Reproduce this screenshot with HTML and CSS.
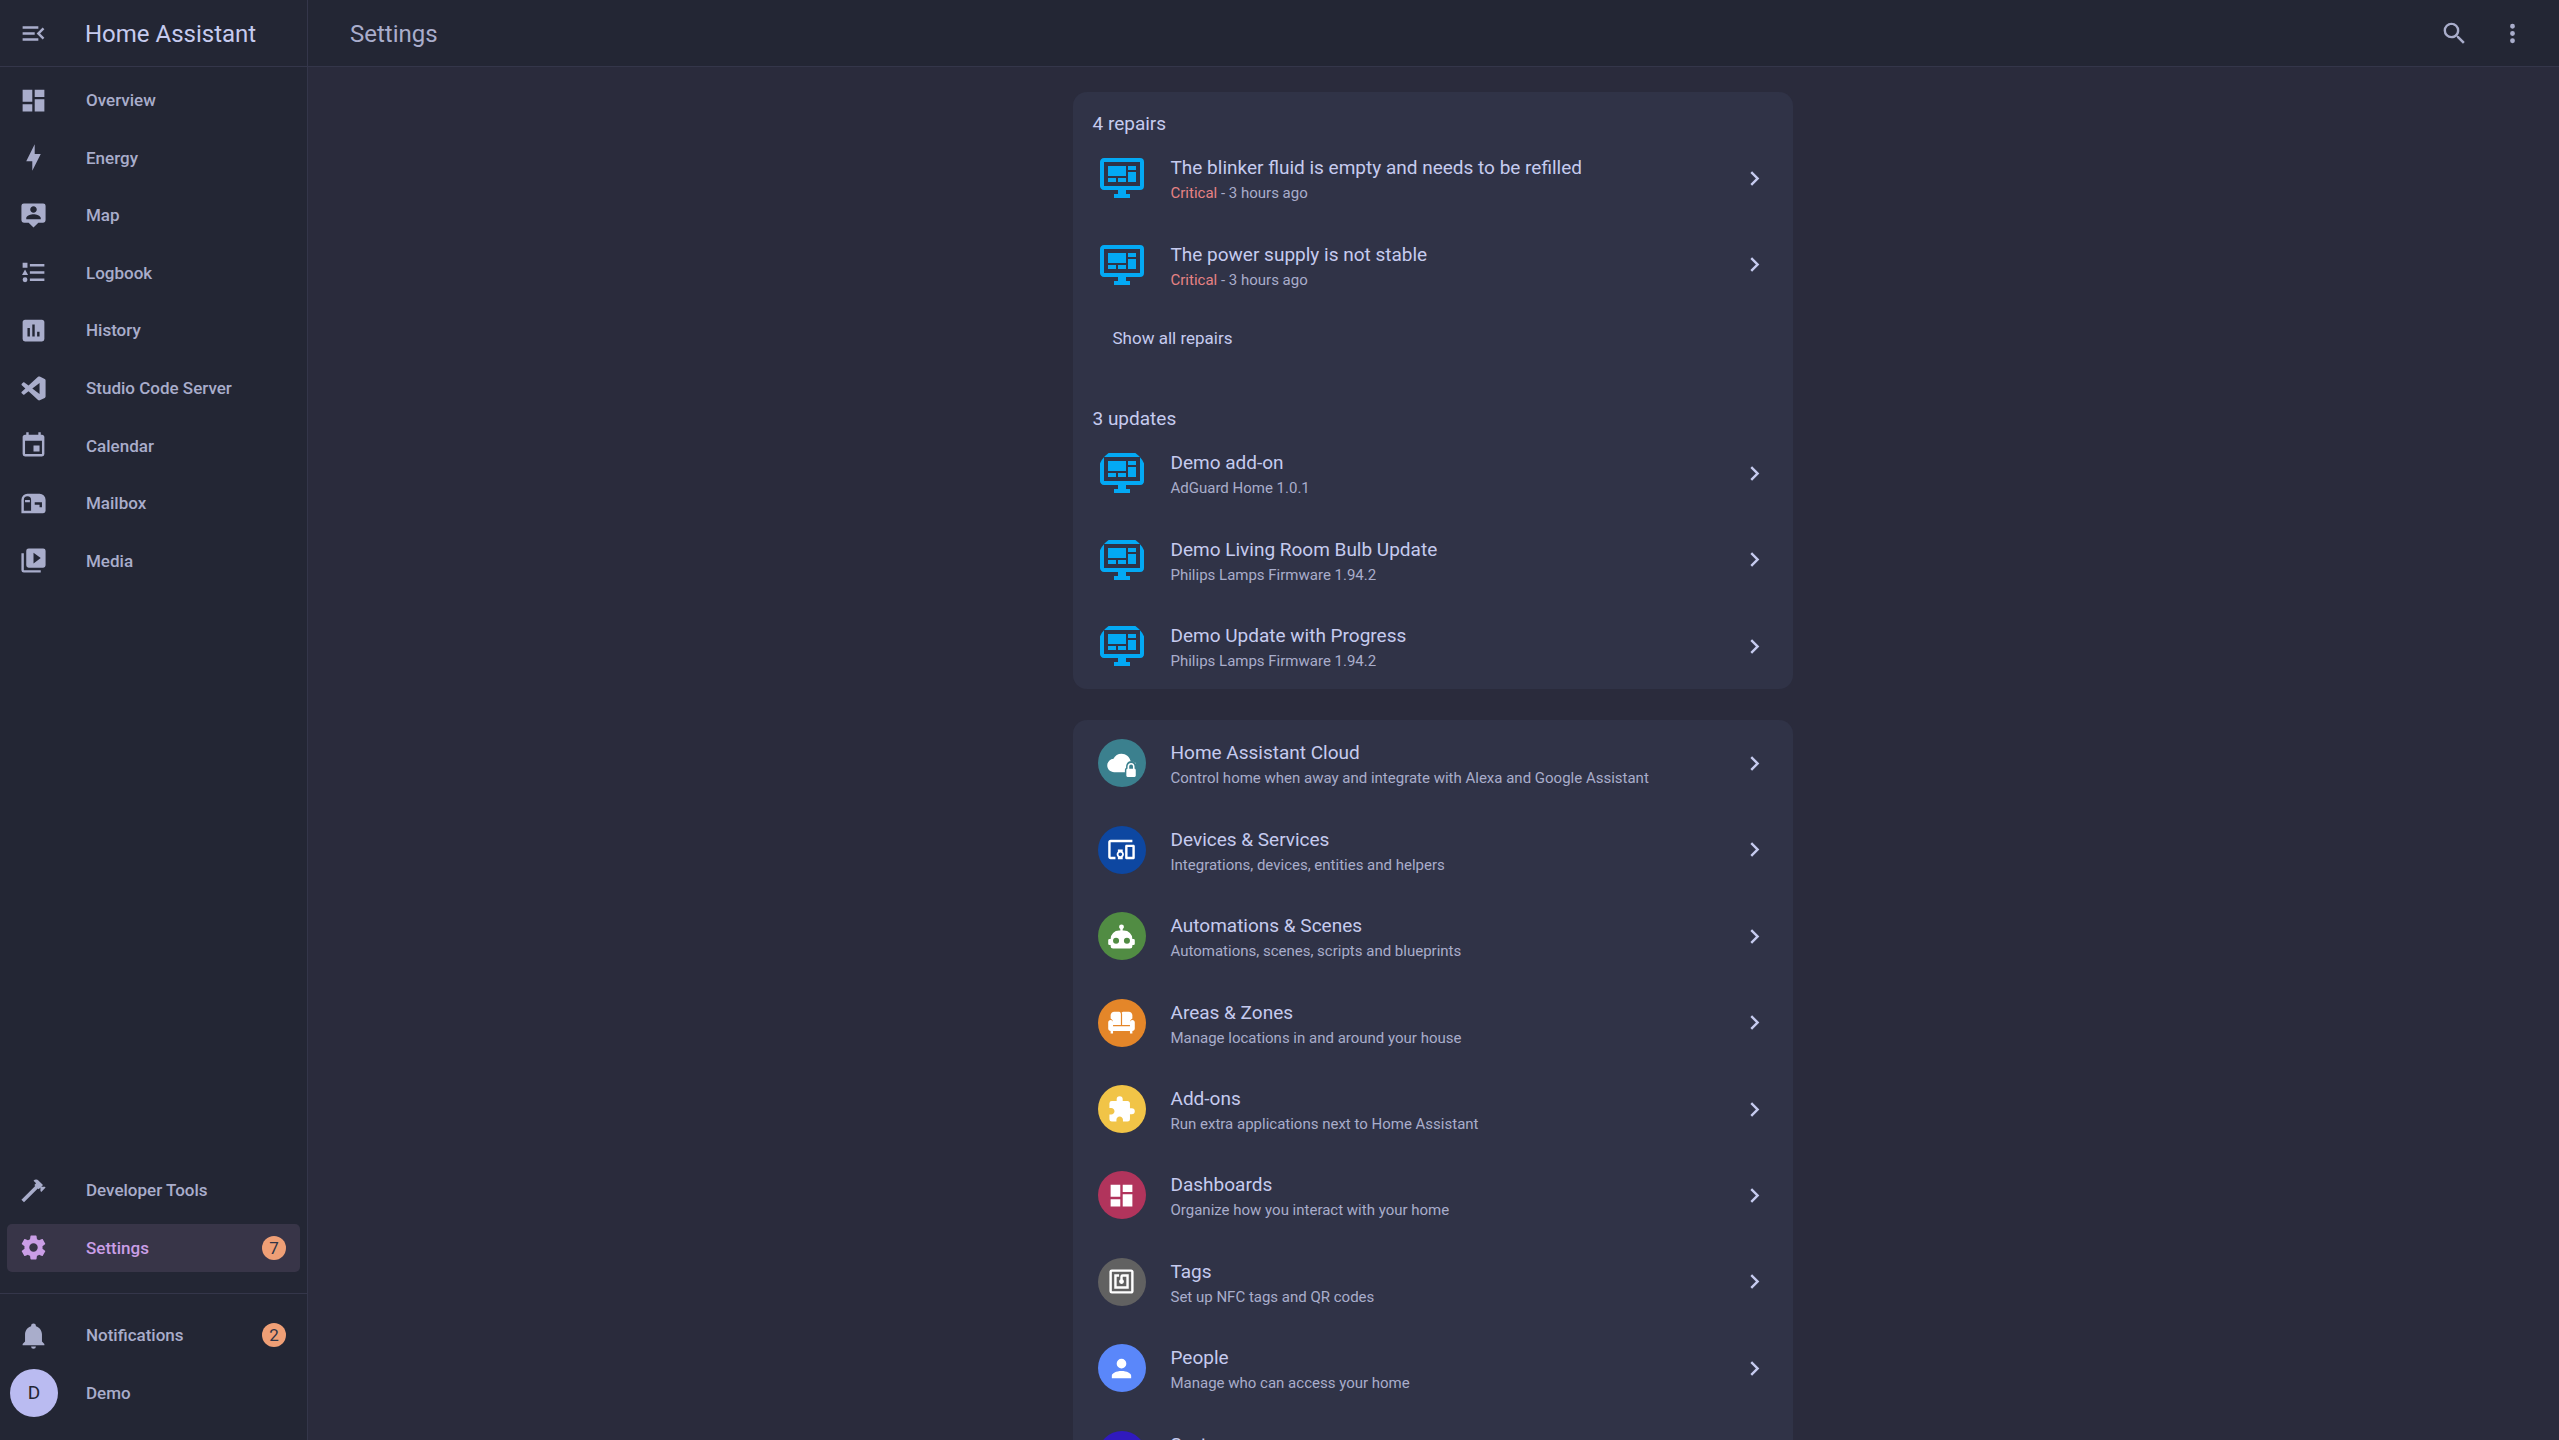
FILE: index.html
```html
<!DOCTYPE html>
<html lang="en">
<head>
<meta charset="utf-8">
<meta name="viewport" content="width=device-width, initial-scale=1">
<title>Settings – Home Assistant</title>
<link rel="stylesheet" href="styles.css">
</head>
<body>
<svg class="defs" aria-hidden="true">
  <symbol id="i-chevron" viewBox="0 0 24 24"><path d="M8.59,16.58L13.17,12L8.59,7.41L10,6L16,12L10,18L8.59,16.58Z"/></symbol>
  <symbol id="i-dashboard" viewBox="0 0 24 24"><path d="M13,3V9H21V3M13,21H21V11H13M3,21H11V15H3M3,13H11V3H3V13Z"/></symbol>
  <symbol id="i-cog" viewBox="0 0 24 24"><path d="M12,15.5A3.5,3.5 0 0,1 8.5,12A3.5,3.5 0 0,1 12,8.5A3.5,3.5 0 0,1 15.5,12A3.5,3.5 0 0,1 12,15.5M19.43,12.97C19.47,12.65 19.5,12.33 19.5,12C19.5,11.67 19.47,11.34 19.43,11L21.54,9.37C21.73,9.22 21.78,8.95 21.66,8.73L19.66,5.27C19.54,5.05 19.27,4.96 19.05,5.05L16.56,6.05C16.04,5.66 15.5,5.32 14.87,5.07L14.5,2.42C14.46,2.18 14.25,2 14,2H10C9.75,2 9.54,2.18 9.5,2.42L9.13,5.07C8.5,5.32 7.96,5.66 7.44,6.05L4.95,5.05C4.73,4.96 4.46,5.05 4.34,5.27L2.34,8.73C2.21,8.95 2.27,9.22 2.46,9.37L4.57,11C4.53,11.34 4.5,11.67 4.5,12C4.5,12.33 4.53,12.65 4.57,12.97L2.46,14.63C2.27,14.78 2.21,15.05 2.34,15.27L4.34,18.73C4.46,18.95 4.73,19.03 4.95,18.95L7.44,17.94C7.96,18.34 8.5,18.68 9.13,18.93L9.5,21.58C9.54,21.82 9.75,22 10,22H14C14.25,22 14.46,21.82 14.5,21.58L14.87,18.93C15.5,18.67 16.04,18.34 16.56,17.94L19.05,18.95C19.27,19.03 19.54,18.95 19.66,18.73L21.66,15.27C21.78,15.05 21.73,14.78 21.54,14.63L19.43,12.97Z"/></symbol>
  <symbol id="i-monitor" viewBox="0 0 24 24"><path d="M21,16V4H3V16H21M21,2A2,2 0 0,1 23,4V16A2,2 0 0,1 21,18H14V20H16V22H8V20H10V18H3C1.89,18 1,17.1 1,16V4C1,2.89 1.89,2 3,2H21M5,6H14V11H5V6M15,6H19V8H15V6M19,9V14H15V9H19M5,12H9V14H5V12M10,12H14V14H10V12Z"/></symbol>
</svg>
<div class="app">
  <aside class="sidebar">
    <div class="brand">
      <button class="icon-button" type="button" aria-label="Collapse sidebar"><svg class="icon" viewBox="0 0 24 24"><path d="M21,15.61L19.59,17L14.58,12L19.59,7L21,8.39L17.44,12L21,15.61M3,6H16V8H3V6M3,13V11H13V13H3M3,18V16H16V18H3Z"/></svg></button>
      <span class="brand-name">Home Assistant</span>
    </div>
    <nav class="nav nav-main" aria-label="Panels">
      <a class="nav-item" href="#overview"><svg class="icon"><use href="#i-dashboard"/></svg><span>Overview</span></a>
      <a class="nav-item" href="#energy"><svg class="icon" viewBox="0 0 24 24"><path d="M11 15H6L13 1V9H18L11 23V15Z"/></svg><span>Energy</span></a>
      <a class="nav-item" href="#map"><svg class="icon" viewBox="0 0 24 24"><path d="M20,2H4A2,2 0 0,0 2,4V16A2,2 0 0,0 4,18H8L12,22L16,18H20A2,2 0 0,0 22,16V4A2,2 0 0,0 20,2M12,4.3C13.5,4.3 14.7,5.5 14.7,7C14.7,8.5 13.5,9.7 12,9.7C10.5,9.7 9.3,8.5 9.3,7C9.3,5.5 10.5,4.3 12,4.3M18,15H6V14.1C6,12.1 10,11 12,11C14,11 18,12.1 18,14.1V15Z"/></svg><span>Map</span></a>
      <a class="nav-item" href="#logbook"><svg class="icon" viewBox="0 0 24 24"><path d="M5,9.5L7.5,14H2.5L5,9.5M3,4H7V8H3V4M5,20A2,2 0 0,0 7,18A2,2 0 0,0 5,16A2,2 0 0,0 3,18A2,2 0 0,0 5,20M9,5V7H21V5H9M9,19H21V17H9V19M9,13H21V11H9V13Z"/></svg><span>Logbook</span></a>
      <a class="nav-item" href="#history"><svg class="icon" viewBox="0 0 24 24"><path d="M17,17H15V13H17M13,17H11V7H13M9,17H7V10H9M19,3H5C3.89,3 3,3.89 3,5V19A2,2 0 0,0 5,21H19A2,2 0 0,0 21,19V5C21,3.89 20.1,3 19,3Z"/></svg><span>History</span></a>
      <a class="nav-item" href="#code"><svg class="icon" viewBox="0 0 24 24"><path d="M21.29 4.1L17.17 2.12C16.7 1.89 16.13 2 15.76 2.36L7.89 9.55L4.46 6.94C4.14 6.7 3.7 6.72 3.4 7L2.3 8C1.93 8.33 1.93 8.9 2.3 9.24L5.27 11.95L2.3 14.66C1.93 15 1.93 15.57 2.3 15.9L3.4 16.9C3.7 17.18 4.14 17.2 4.46 16.96L7.89 14.35L15.76 21.54C16.13 21.91 16.7 22 17.17 21.8L21.29 19.8C21.72 19.59 22 19.15 22 18.67V5.23C22 4.75 21.72 4.31 21.29 4.1M17 16.47L11.03 11.95L17 7.42V16.47Z"/></svg><span>Studio Code Server</span></a>
      <a class="nav-item" href="#calendar"><svg class="icon" viewBox="0 0 24 24"><path d="M19,19H5V8H19M16,1V3H8V1H6V3H5C3.89,3 3,3.89 3,5V19A2,2 0 0,0 5,21H19A2,2 0 0,0 21,19V5C21,3.89 20.1,3 19,3H18V1M17,12H12V17H17V12Z"/></svg><span>Calendar</span></a>
      <a class="nav-item" href="#mailbox"><svg class="icon" viewBox="0 0 24 24"><path fill-rule="evenodd" d="M17,4H7A5,5 0 0,0 2,9V20H20A2,2 0 0,0 22,18V9A5,5 0 0,0 17,4M10,18H4V9A3,3 0 0,1 7,6A3,3 0 0,1 10,9V18M19,15H17V13H13V11H19V15M9,11H5V9H9V11Z"/></svg><span>Mailbox</span></a>
      <a class="nav-item" href="#media"><svg class="icon" viewBox="0 0 24 24"><path d="M4,6H2V20A2,2 0 0,0 4,22H18V20H4V6M20,2H8A2,2 0 0,0 6,4V16A2,2 0 0,0 8,18H20A2,2 0 0,0 22,16V4A2,2 0 0,0 20,2M12,14.5V5.5L18,10L12,14.5Z"/></svg><span>Media</span></a>
    </nav>
    <nav class="nav" aria-label="Administration">
      <a class="nav-item" href="#tools"><svg class="icon" viewBox="0 0 24 24"><path d="M2,19.63L13.43,8.2L12.72,7.5L14.14,6.07L12,3.89C13.2,2.7 15.09,2.7 16.27,3.89L19.87,7.5L18.45,8.91H21.29L22,9.62L18.45,13.21L17.74,12.5V9.62L16.27,11.04L15.56,10.33L4.13,21.76L2,19.63Z"/></svg><span>Developer Tools</span></a>
      <a class="nav-item selected" href="#settings" aria-current="page"><svg class="icon"><use href="#i-cog"/></svg><span>Settings</span><span class="badge">7</span></a>
    </nav>
    <div class="nav nav-user">
      <a class="nav-item" href="#notifications"><svg class="icon" viewBox="0 0 24 24"><path d="M21,19V20H3V19L5,17V11C5,7.9 7.03,5.17 10,4.29C10,4.19 10,4.1 10,4A2,2 0 0,1 12,2A2,2 0 0,1 14,4C14,4.1 14,4.19 14,4.29C16.97,5.17 19,7.9 19,11V17L21,19M14,21A2,2 0 0,1 12,23A2,2 0 0,1 10,21"/></svg><span>Notifications</span><span class="badge">2</span></a>
      <a class="nav-item profile" href="#profile"><span class="avatar">D</span><span>Demo</span></a>
    </div>
  </aside>
  <div class="page">
    <header class="toolbar">
      <h1>Settings</h1>
      <button class="icon-button" type="button" aria-label="Search"><svg class="icon" viewBox="0 0 24 24"><path d="M9.5,3A6.5,6.5 0 0,1 16,9.5C16,11.11 15.41,12.59 14.44,13.73L14.71,14H15.5L20.5,19L19,20.5L14,15.5V14.71L13.73,14.44C12.59,15.41 11.11,16 9.5,16A6.5,6.5 0 0,1 3,9.5A6.5,6.5 0 0,1 9.5,3M9.5,5C7,5 5,7 5,9.5C5,12 7,14 9.5,14C12,14 14,12 14,9.5C14,7 12,5 9.5,5Z"/></svg></button>
      <button class="icon-button" type="button" aria-label="More options"><svg class="icon" viewBox="0 0 24 24"><path d="M12,16A2,2 0 0,1 14,18A2,2 0 0,1 12,20A2,2 0 0,1 10,18A2,2 0 0,1 12,16M12,10A2,2 0 0,1 14,12A2,2 0 0,1 12,14A2,2 0 0,1 10,12A2,2 0 0,1 12,10M12,4A2,2 0 0,1 14,6A2,2 0 0,1 12,8A2,2 0 0,1 10,6A2,2 0 0,1 12,4Z"/></svg></button>
    </header>
    <main class="content">
      <section class="card">
        <h2>4 repairs</h2>
        <div class="rows">
          <a class="row" href="#repair-1"><svg class="device"><use href="#i-monitor"/></svg><span class="text"><span class="title">The blinker fluid is empty and needs to be refilled</span><span class="detail"><span class="critical">Critical</span> - 3 hours ago</span></span><svg class="icon"><use href="#i-chevron"/></svg></a>
          <a class="row" href="#repair-2"><svg class="device"><use href="#i-monitor"/></svg><span class="text"><span class="title">The power supply is not stable</span><span class="detail"><span class="critical">Critical</span> - 3 hours ago</span></span><svg class="icon"><use href="#i-chevron"/></svg></a>
        </div>
        <button class="show-all" type="button">Show all repairs</button>
        <h2>3 updates</h2>
        <div class="rows">
          <a class="row" href="#update-1"><svg class="device round"><use href="#i-monitor"/></svg><span class="text"><span class="title">Demo add-on</span><span class="detail">AdGuard Home 1.0.1</span></span><svg class="icon"><use href="#i-chevron"/></svg></a>
          <a class="row" href="#update-2"><svg class="device round"><use href="#i-monitor"/></svg><span class="text"><span class="title">Demo Living Room Bulb Update</span><span class="detail">Philips Lamps Firmware 1.94.2</span></span><svg class="icon"><use href="#i-chevron"/></svg></a>
          <a class="row" href="#update-3"><svg class="device round"><use href="#i-monitor"/></svg><span class="text"><span class="title">Demo Update with Progress</span><span class="detail">Philips Lamps Firmware 1.94.2</span></span><svg class="icon"><use href="#i-chevron"/></svg></a>
        </div>
      </section>
      <nav class="card rows" aria-label="Configuration">
        <a class="row" href="#cloud"><span class="disc cloud"><svg class="icon" viewBox="0 0 24 24"><path fill-rule="evenodd" d="M12,4C9.11,4 6.6,5.64 5.35,8.03C2.34,8.36 0.2,10.9 0.2,13.5C0.2,16.8 2.7,19.2 6,19.2H14.8V17.5C14.8,16.6 15.2,15.9 15.8,15.5V14.5C15.8,12 17.6,10 20,10C21.7,10 23.3,10.9 24,12.6C24,11.2 22,9.9 19.35,9.7C18.67,6.4 15.64,4 12,4M20,11.5C18.2,11.5 17,12.8 17,14.5V16.4C16.4,16.4 16,16.9 16,17.5V22C16,22.6 16.4,23.2 17,23.2H22.8C23.4,23.2 23.8,22.6 23.8,22V17.5C23.8,16.9 23.4,16.4 22.8,16.4V14.5C22.8,12.8 21.7,11.5 20,11.5M20,12.8C20.9,12.8 21.5,13.6 21.5,14.5V16.4H18.4V14.5C18.4,13.6 19.1,12.8 20,12.8Z"/></svg></span><span class="text"><span class="title">Home Assistant Cloud</span><span class="detail">Control home when away and integrate with Alexa and Google Assistant</span></span><svg class="icon"><use href="#i-chevron"/></svg></a>
        <a class="row" href="#devices"><span class="disc devices"><svg class="icon" viewBox="0 0 24 24"><path d="M3 6H21V4H3C1.9 4 1 4.9 1 6V18C1 19.1 1.9 20 3 20H7V18H3V6M13 12H9V13.78C8.39 14.33 8 15.11 8 16C8 16.89 8.39 17.67 9 18.22V20H13V18.22C13.61 17.67 14 16.88 14 16S13.61 14.33 13 13.78V12M11 17.5C10.17 17.5 9.5 16.83 9.5 16S10.17 14.5 11 14.5 12.5 15.17 12.5 16 11.83 17.5 11 17.5M22 8H16C15.5 8 15 8.5 15 9V19C15 19.5 15.5 20 16 20H22C22.5 20 23 19.5 23 19V9C23 8.5 22.5 8 22 8M21 18H17V10H21V18Z"/></svg></span><span class="text"><span class="title">Devices &amp; Services</span><span class="detail">Integrations, devices, entities and helpers</span></span><svg class="icon"><use href="#i-chevron"/></svg></a>
        <a class="row" href="#automations"><span class="disc automations"><svg class="icon" viewBox="0 0 24 24"><path d="M12,2A2,2 0 0,1 14,4C14,4.74 13.6,5.39 13,5.73V7H14A7,7 0 0,1 21,14H22A1,1 0 0,1 23,15V18A1,1 0 0,1 22,19H21V20A2,2 0 0,1 19,22H5A2,2 0 0,1 3,20V19H2A1,1 0 0,1 1,18V15A1,1 0 0,1 2,14H3A7,7 0 0,1 10,7H11V5.73C10.4,5.39 10,4.74 10,4A2,2 0 0,1 12,2M7.5,13A2.5,2.5 0 0,0 5,15.5A2.5,2.5 0 0,0 7.5,18A2.5,2.5 0 0,0 10,15.5A2.5,2.5 0 0,0 7.5,13M16.5,13A2.5,2.5 0 0,0 14,15.5A2.5,2.5 0 0,0 16.5,18A2.5,2.5 0 0,0 19,15.5A2.5,2.5 0 0,0 16.5,13Z"/></svg></span><span class="text"><span class="title">Automations &amp; Scenes</span><span class="detail">Automations, scenes, scripts and blueprints</span></span><svg class="icon"><use href="#i-chevron"/></svg></a>
        <a class="row" href="#areas"><span class="disc areas"><svg class="icon" viewBox="0 0 24 24"><path d="M12 4C12.37 3.4 13.1 3 14 3H18C19.65 3 21 4.35 21 6V8.78C19.81 9.34 19 10.5 19 12V14H12.5V5C12.5 4.6 12.3 4.3 12 4M11.5 14H5V12C5 10.5 4.2 9.34 3 8.78V6C3 4.35 4.35 3 6 3H10C11 3 11.5 4 11.5 5V14M21 10C19.9 10 19 10.9 19 12V15H5V12C5 10.9 4.11 10 3 10S1 10.9 1 12V17C1 18.1 1.9 19 3 19V21H5V19H19V21H21V19C22.1 19 23 18.1 23 17V12C23 10.9 22.1 10 21 10Z"/></svg></span><span class="text"><span class="title">Areas &amp; Zones</span><span class="detail">Manage locations in and around your house</span></span><svg class="icon"><use href="#i-chevron"/></svg></a>
        <a class="row" href="#addons"><span class="disc addons"><svg class="icon" viewBox="0 0 24 24"><path d="M20.5,11H19V7C19,5.89 18.1,5 17,5H13V3.5A2.5,2.5 0 0,0 10.5,1A2.5,2.5 0 0,0 8,3.5V5H4A2,2 0 0,0 2,7V10.8H3.5C5,10.8 6.2,12 6.2,13.5C6.2,15 5,16.2 3.5,16.2H2V20A2,2 0 0,0 4,22H7.8V20.5C7.8,19 9,17.8 10.5,17.8C12,17.8 13.2,19 13.2,20.5V22H17A2,2 0 0,0 19,20V16H20.5A2.5,2.5 0 0,0 23,13.5A2.5,2.5 0 0,0 20.5,11Z"/></svg></span><span class="text"><span class="title">Add-ons</span><span class="detail">Run extra applications next to Home Assistant</span></span><svg class="icon"><use href="#i-chevron"/></svg></a>
        <a class="row" href="#dashboards"><span class="disc dashboards"><svg class="icon"><use href="#i-dashboard"/></svg></span><span class="text"><span class="title">Dashboards</span><span class="detail">Organize how you interact with your home</span></span><svg class="icon"><use href="#i-chevron"/></svg></a>
        <a class="row" href="#tags"><span class="disc tags"><svg class="icon" viewBox="0 0 24 24"><path d="M18,6H13A2,2 0 0,0 11,8V10.28C10.41,10.62 10,11.26 10,12A2,2 0 0,0 12,14C13.11,14 14,13.1 14,12C14,11.26 13.6,10.62 13,10.28V8H16V16H8V8H10V6H8L6,6V18H18M20,20H4V4H20M20,2H4A2,2 0 0,0 2,4V20A2,2 0 0,0 4,22H20C21.11,22 22,21.1 22,20V4C22,2.89 21.11,2 20,2Z"/></svg></span><span class="text"><span class="title">Tags</span><span class="detail">Set up NFC tags and QR codes</span></span><svg class="icon"><use href="#i-chevron"/></svg></a>
        <a class="row" href="#people"><span class="disc people"><svg class="icon" viewBox="0 0 24 24"><path d="M12,4A4,4 0 0,1 16,8A4,4 0 0,1 12,12A4,4 0 0,1 8,8A4,4 0 0,1 12,4M12,14C16.42,14 20,15.79 20,18V20H4V18C4,15.79 7.58,14 12,14Z"/></svg></span><span class="text"><span class="title">People</span><span class="detail">Manage who can access your home</span></span><svg class="icon"><use href="#i-chevron"/></svg></a>
        <a class="row" href="#system"><span class="disc system"><svg class="icon"><use href="#i-cog"/></svg></span><span class="text"><span class="title">System</span></span><svg class="icon"><use href="#i-chevron"/></svg></a>
      </nav>
    </main>
  </div>
</div>
</body>
</html>
```
FILE: styles.css
```css
:root {
  --crust: #232634;
  --mantle: #2a2b3c;
  --card: #303347;
  --divider: #34364a;
  --text: #c6cbef;
  --subtext: #a9adcb;
  --accent: #ca9ee6;
  --peach: #ef9f76;
  --lavender: #babbf1;
  --red: #e78284;
  --blue: #03a9f4;
}

* { box-sizing: border-box; }

body {
  margin: 0;
  background: var(--mantle);
  color: var(--text);
  font-family: Roboto, "Noto Sans", sans-serif;
  font-size: 17px;
}

a { color: inherit; text-decoration: none; }

button {
  border: 0;
  padding: 0;
  background: none;
  color: inherit;
  font: inherit;
  cursor: pointer;
}

.defs { display: none; }

.icon {
  flex: none;
  width: 29px;
  height: 29px;
  fill: currentColor;
  overflow: visible;
}

.app {
  display: flex;
  height: 100vh;
}

/* Sidebar */
.sidebar {
  display: flex;
  flex-direction: column;
  flex: none;
  width: 308px;
  padding-bottom: 19px;
  border-right: 1px solid var(--divider);
  background: var(--crust);
  color: var(--subtext);
}

.brand {
  display: flex;
  align-items: center;
  height: 67px;
  padding-left: 4px;
  gap: 23px;
  border-bottom: 1px solid var(--divider);
}

.brand-name {
  padding-top: 2px;
  color: var(--text);
  font-size: 24px;
}

.icon-button {
  display: flex;
  align-items: center;
  justify-content: center;
  width: 58px;
  height: 58px;
}

.nav {
  display: grid;
  grid-auto-rows: 58px 57px 58px 57px 58px;
  align-items: center;
  padding: 0 7px;
  font-weight: 500;
}

.nav-main {
  flex: 1;
  align-content: start;
  padding-top: 4px;
}

.nav-user {
  margin-top: 17px;
  padding-top: 12px;
  border-top: 1px solid var(--divider);
}

.nav-item {
  display: flex;
  align-items: center;
  gap: 38px;
  height: 48px;
  padding: 0 14px 0 12px;
  border-radius: 5px;
}

.nav-item.selected {
  background: #383548;
  color: var(--accent);
}

.profile {
  gap: 28px;
  padding-left: 3px;
}

.badge {
  width: 24px;
  margin-left: auto;
  border-radius: 50%;
  background: var(--peach);
  color: #303446;
  font-weight: 400;
  line-height: 24px;
  text-align: center;
}

.avatar {
  width: 48px;
  border-radius: 50%;
  background: var(--lavender);
  color: var(--crust);
  font-size: 19px;
  font-weight: 400;
  line-height: 48px;
  text-align: center;
}

/* Page */
.page {
  display: flex;
  flex-direction: column;
  flex: 1;
  min-width: 0;
}

.toolbar {
  display: flex;
  align-items: center;
  flex: none;
  height: 67px;
  padding: 0 18px 0 42px;
  border-bottom: 1px solid var(--divider);
  background: var(--crust);
  color: var(--subtext);
}

.toolbar h1 {
  flex: 1;
  margin: 0;
  padding-top: 2px;
  font-size: 24px;
  font-weight: 400;
}

.content {
  display: flex;
  flex-direction: column;
  align-items: center;
  gap: 31px;
  flex: 1;
  overflow: hidden;
  padding: 25px 20px 0 18px;
}

.card {
  flex: none;
  width: 100%;
  max-width: 720px;
  border-radius: 14px;
  background: var(--card);
}

.card h2 {
  margin: 0;
  padding: 20px 20px 0;
  font-size: 19px;
  font-weight: 400;
  line-height: 23px;
}

.rows {
  display: grid;
  grid-auto-rows: 86px 87px 86px 87px 86px;
}

.row {
  display: flex;
  align-items: center;
  gap: 25px;
  padding: 0 24px 0 25px;
}

.row > .icon { color: var(--text); }

.text {
  display: flex;
  flex-direction: column;
  flex: 1;
  min-width: 0;
  padding-top: 4px;
}

.title {
  font-size: 19px;
  line-height: 26px;
}

.detail {
  color: var(--subtext);
  font-size: 15px;
  line-height: 24px;
}

.title:only-child { padding-bottom: 24px; }

.critical { color: var(--red); }

.show-all {
  display: block;
  height: 60px;
  margin: 0 0 19px 20px;
  padding: 0 20px;
}

.device {
  flex: none;
  width: 48px;
  height: 48px;
  fill: var(--blue);
}

.device.round { border-radius: 50%; }

.disc {
  display: flex;
  align-items: center;
  justify-content: center;
  flex: none;
  width: 48px;
  height: 48px;
  border-radius: 50%;
  color: #fff;
}

.cloud { background: #3b808e; }
.devices { background: #0d47a1; }
.automations { background: #518c43; }
.areas { background: #e48629; }
.addons { background: #f1c447; }
.dashboards { background: #b1345c; }
.tags { background: #616161; }
.people { background: #5a87fa; }
.system { background: #301abe; }
```
